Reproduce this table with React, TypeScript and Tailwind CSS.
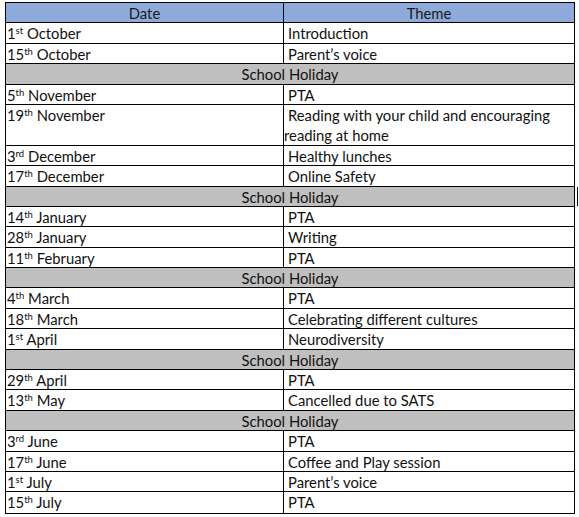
type Row =
  | { kind: "item"; day: string; suf: string; month: string; theme: string; tall?: boolean }
  | { kind: "holiday"; mark?: boolean };

const rows: Row[] = [
  { kind: "item", day: "1", suf: "st", month: "October", theme: "Introduction" },
  { kind: "item", day: "15", suf: "th", month: "October", theme: "Parent’s voice" },
  { kind: "holiday" },
  { kind: "item", day: "5", suf: "th", month: "November", theme: "PTA" },
  {
    kind: "item",
    day: "19",
    suf: "th",
    month: "November",
    theme: "Reading with your child and encouraging reading at home",
    tall: true,
  },
  { kind: "item", day: "3", suf: "rd", month: "December", theme: "Healthy lunches" },
  { kind: "item", day: "17", suf: "th", month: "December", theme: "Online Safety" },
  { kind: "holiday", mark: true },
  { kind: "item", day: "14", suf: "th", month: "January", theme: "PTA" },
  { kind: "item", day: "28", suf: "th", month: "January", theme: "Writing" },
  { kind: "item", day: "11", suf: "th", month: "February", theme: "PTA" },
  { kind: "holiday" },
  { kind: "item", day: "4", suf: "th", month: "March", theme: "PTA" },
  { kind: "item", day: "18", suf: "th", month: "March", theme: "Celebrating different cultures" },
  { kind: "item", day: "1", suf: "st", month: "April", theme: "Neurodiversity" },
  { kind: "holiday" },
  { kind: "item", day: "29", suf: "th", month: "April", theme: "PTA" },
  { kind: "item", day: "13", suf: "th", month: "May", theme: "Cancelled due to SATS" },
  { kind: "holiday" },
  { kind: "item", day: "3", suf: "rd", month: "June", theme: "PTA" },
  { kind: "item", day: "17", suf: "th", month: "June", theme: "Coffee and Play session" },
  { kind: "item", day: "1", suf: "st", month: "July", theme: "Parent’s voice" },
  { kind: "item", day: "15", suf: "th", month: "July", theme: "PTA" },
];

export default function App() {
  return (
    <div className="w-[579px] h-[517px] bg-white pt-[2px] pl-[5px] text-[14.8px] text-[#111] font-['Lato','Open_Sans',sans-serif]">
      <div className="w-[570px] border border-black">
        {/* header */}
        <div className="flex h-[20.4px] bg-[#8eaadb] border-b border-black leading-[20px] text-[#1a1a1a]">
          <div className="w-[278px] border-r border-black text-center">Date</div>
          <div className="flex-1 text-center">Theme</div>
        </div>

        {rows.map((r, i) =>
          r.kind === "holiday" ? (
            <div
              key={i}
              className="relative h-[20.4px] bg-[#bfbfbf] border-b border-black text-center leading-[20px]"
            >
              School Holiday
              {r.mark && <div className="absolute right-[-4px] top-0 h-[19px] w-px bg-black" />}
            </div>
          ) : (
            <div
              key={i}
              className={`flex border-black ${i === rows.length - 1 ? "" : "border-b"} ${
                r.tall ? "h-[40.8px]" : "h-[20.4px]"
              }`}
            >
              <div className="w-[278px] border-r border-black pl-[1px] leading-[20.5px] whitespace-nowrap">
                {r.day}
                <sup className="text-[9.5px] align-baseline top-[-5px]">{r.suf}</sup> {r.month}
              </div>
              <div className="flex-1 indent-[4px] leading-[20.5px]">{r.theme}</div>
            </div>
          )
        )}
      </div>
    </div>
  );
}
